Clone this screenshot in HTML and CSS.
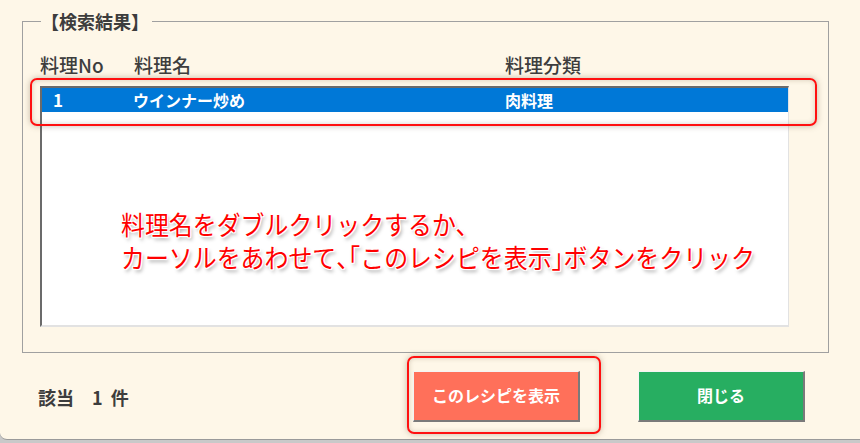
FILE: index.html
```html
<!DOCTYPE html>
<html lang="ja">

<head>
    <meta charset="UTF-8">
    <meta name="viewport" content="width=device-width, initial-scale=1.0">
    <title>検索結果</title>
    <link rel="stylesheet" href="styles.css">
</head>

<body>

    <div class="dialog">
        <fieldset class="result">
            <legend>【検索結果】</legend>

            <div class="cols">
                <span class="col-no">料理No</span>
                <span class="col-name">料理名</span>
                <span class="col-kind">料理分類</span>
            </div>

            <div class="listbox">
                <div class="row selected">
                    <span class="col-no">1</span>
                    <span class="col-name">ウインナー炒め</span>
                    <span class="col-kind">肉料理</span>
                </div>

                <!-- 注釈 -->
                <div class="mark mark-row"></div>
                <p class="note">料理名をダブルクリックするか、<br>カーソルをあわせて<span class="p">、「</span>このレシピを表示<span class="p">」</span>ボタンをクリック</p>
            </div>
        </fieldset>

        <div class="footer">
            <div class="count">該当　1 件</div>
            <div class="btns">
                <div class="btn-wrap">
                    <a class="btn btn-show" href="javascript:;">このレシピを表示</a>
                    <div class="mark mark-btn"></div>
                </div>
                <a class="btn btn-close" href="javascript:;">閉じる</a>
            </div>
        </div>
    </div>

</body>

</html>
```

FILE: styles.css
```css
* {
    margin: 0;
    padding: 0;
    box-sizing: border-box;
}

html,
body {
    width: 860px;
    height: 443px;
    overflow: hidden;
}

body {
    background: #c9c9c9;
    font-family: "Noto Sans CJK JP", "Noto Sans", sans-serif;
    color: #3d3d3d;
}

.dialog {
    height: 440px;
    background: #fef7e8;
    border-bottom: 1px solid #9a9a9a;
    border-bottom-left-radius: 7px;
    padding-top: 9px;
}

.result {
    margin-left: 22px;
    width: 807px;
    height: 344px;
    border: 1px solid #a0a0a0;
    padding: 0 0 0 17px;
}

.result legend {
    margin-left: 1px;
    padding: 0 3px 0 0;
    font-size: 18px;
    font-weight: bold;
    line-height: 24px;
}

.cols {
    display: flex;
    height: 24px;
    margin-top: 20px;
    font-size: 19px;
    font-weight: 500;
    line-height: 24px;
}

.cols .col-no {
    width: 94px;
}

.cols .col-name {
    width: 371px;
}

.listbox {
    position: relative;
    width: 749px;
    height: 241px;
    margin-top: 9px;
    background: #fff;
    border-top: 2px solid #6b6b6b;
    border-left: 2px solid #6b6b6b;
    border-right: 1px solid #e2e2e2;
    border-bottom: 2px solid #e2e2e2;
}

.row {
    display: flex;
    height: 24px;
    line-height: 24px;
    font-size: 16px;
    font-weight: bold;
}

.row.selected {
    background: #0078d7;
    color: #fff;
}

.row .col-no {
    width: 91px;
    padding-left: 11px;
    font-size: 17px;
}

.row .col-name {
    width: 372px;
}

/* 赤枠 */
.mark {
    position: absolute;
    border: 2px solid #ff1010;
    border-radius: 7px;
    box-shadow: 0 0 6px rgba(90, 70, 40, 0.35), inset 0 0 5px rgba(90, 70, 40, 0.25);
    pointer-events: none;
}

.mark-row {
    left: -12px;
    top: -10px;
    width: 787px;
    height: 48px;
}

.note {
    position: absolute;
    left: 79px;
    top: 119px;
    width: 760px;
    font-size: 26px;
    line-height: 33px;
    color: #ff0000;
    white-space: nowrap;
    transform: scaleX(0.92);
    transform-origin: left top;
    text-shadow:
        1px 0 0 #fff, -1px 0 0 #fff, 0 1px 0 #fff, 0 -1px 0 #fff,
        1px 1px 0 #fff, -1px -1px 0 #fff, 1px -1px 0 #fff, -1px 1px 0 #fff,
        2px 3px 4px rgba(0, 0, 0, 0.35);
}

.note .p {
    font-feature-settings: "halt";
}

.footer {
    display: flex;
    align-items: center;
    margin-top: 18px;
    padding-left: 38px;
}

.count {
    font-size: 18px;
    font-weight: bold;
    word-spacing: 4px;
}

.btns {
    display: flex;
    gap: 58px;
    margin-left: auto;
    margin-right: 55px;
}

.btn-wrap {
    position: relative;
}

.btn {
    display: block;
    width: 167px;
    height: 51px;
    line-height: 47px;
    text-align: center;
    font-size: 16px;
    font-weight: bold;
    color: #fff;
    text-decoration: none;
    border-top: 1px solid #f4f4f4;
    border-left: 1px solid #f4f4f4;
    border-right: 2px solid #7a7a7a;
    border-bottom: 2px solid #7a7a7a;
}

.btn-show {
    background: #ff705a;
}

.btn-close {
    background: #27ae61;
}

.mark-btn {
    left: -6px;
    top: -15px;
    width: 194px;
    height: 78px;
}
```
